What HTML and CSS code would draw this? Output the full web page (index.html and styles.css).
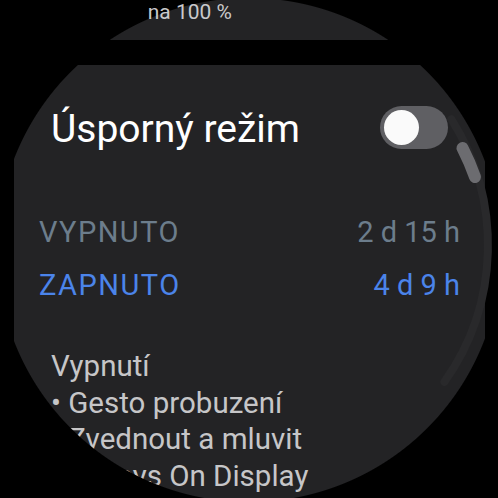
FILE: index.html
```html
<!DOCTYPE html>
<html lang="cs">
<head>
<meta charset="utf-8">
<link rel="stylesheet" href="styles.css">
</head>
<body>
<div class="screen">
  <div class="card-prev">
    <div class="prev-label"><span>Nabito na 100 %</span></div>
  </div>
  <div class="card-main">
    <div class="header">
      <div class="title">Úsporný režim</div>
      <div class="toggle"><div class="knob"></div></div>
    </div>
    <div class="stats">
      <div class="row off"><span class="label">VYPNUTO</span><span>2 d 15 h</span></div>
      <div class="row on"><span class="label">ZAPNUTO</span><span>4 d 9 h</span></div>
    </div>
    <div class="desc">
      <div>Vypnutí</div>
      <div>• Gesto probuzení</div>
      <div>• Zvednout a mluvit</div>
      <div>• Always On Display</div>
    </div>
  </div>
  <div class="mask"></div>
  <svg class="scroll" width="498" height="498" viewBox="0 0 498 498">
    <path d="M 451.3 119.1 A 236 236 0 0 1 444.4 381.9" fill="none" stroke="#29292b" stroke-width="8" stroke-linecap="round"/>
    <path d="M 462.5 148.0 A 238 238 0 0 1 475.0 177.0" fill="none" stroke="#6c6c70" stroke-width="12" stroke-linecap="round"/>
  </svg>
</div>
</body>
</html>
```
FILE: styles.css
```css
html, body {
  margin: 0;
  padding: 0;
  background: #000;
}
.screen {
  position: relative;
  width: 498px;
  height: 498px;
  overflow: hidden;
  background: #000;
  font-family: Roboto, "Noto Sans", sans-serif;
}
.card-prev {
  height: 40px;
  margin: 0 14px;
  background: #232325;
  display: flex;
  align-items: flex-start;
}
.prev-label {
  position: relative;
  z-index: 3;
  margin-left: 128px;
  width: 90px;
  overflow: hidden;
  display: flex;
  justify-content: flex-end;
  white-space: nowrap;
  color: #c9c9cb;
  font-size: 21px;
  line-height: 24px;
}
.card-main {
  margin: 25px 13px 0 14px;
  height: 480px;
  background: #232325;
}
.header {
  display: flex;
  align-items: flex-start;
  justify-content: space-between;
  padding: 41px 37px 0 37px;
}
.title {
  color: #fff;
  font-size: 39px;
  line-height: 43px;
  margin-top: 2px;
}
.toggle {
  width: 68px;
  height: 43px;
  border-radius: 22px;
  background: #5f5f63;
  display: flex;
  align-items: center;
  padding-left: 4px;
  box-sizing: border-box;
}
.knob {
  width: 35px;
  height: 35px;
  border-radius: 50%;
  background: #fafafa;
}
.stats {
  padding: 55px 25px 0 25px;
}
.row {
  display: flex;
  justify-content: space-between;
  font-size: 29px;
  line-height: 53px;
}
.row .label { letter-spacing: 1.5px; }
.row.off { color: #6c7d8c; }
.row.on { color: #4b84ea; }
.desc {
  padding: 36px 37px 0 37px;
  color: #c6c6c8;
  font-size: 29.5px;
  line-height: 36.7px;
}
.mask {
  position: absolute;
  inset: 0;
  z-index: 2;
  background: radial-gradient(circle 252px at 249px 250px, transparent 251.5px, #000 252.5px);
  pointer-events: none;
}
.scroll {
  position: absolute;
  left: 0;
  top: 0;
  z-index: 1;
}
```
